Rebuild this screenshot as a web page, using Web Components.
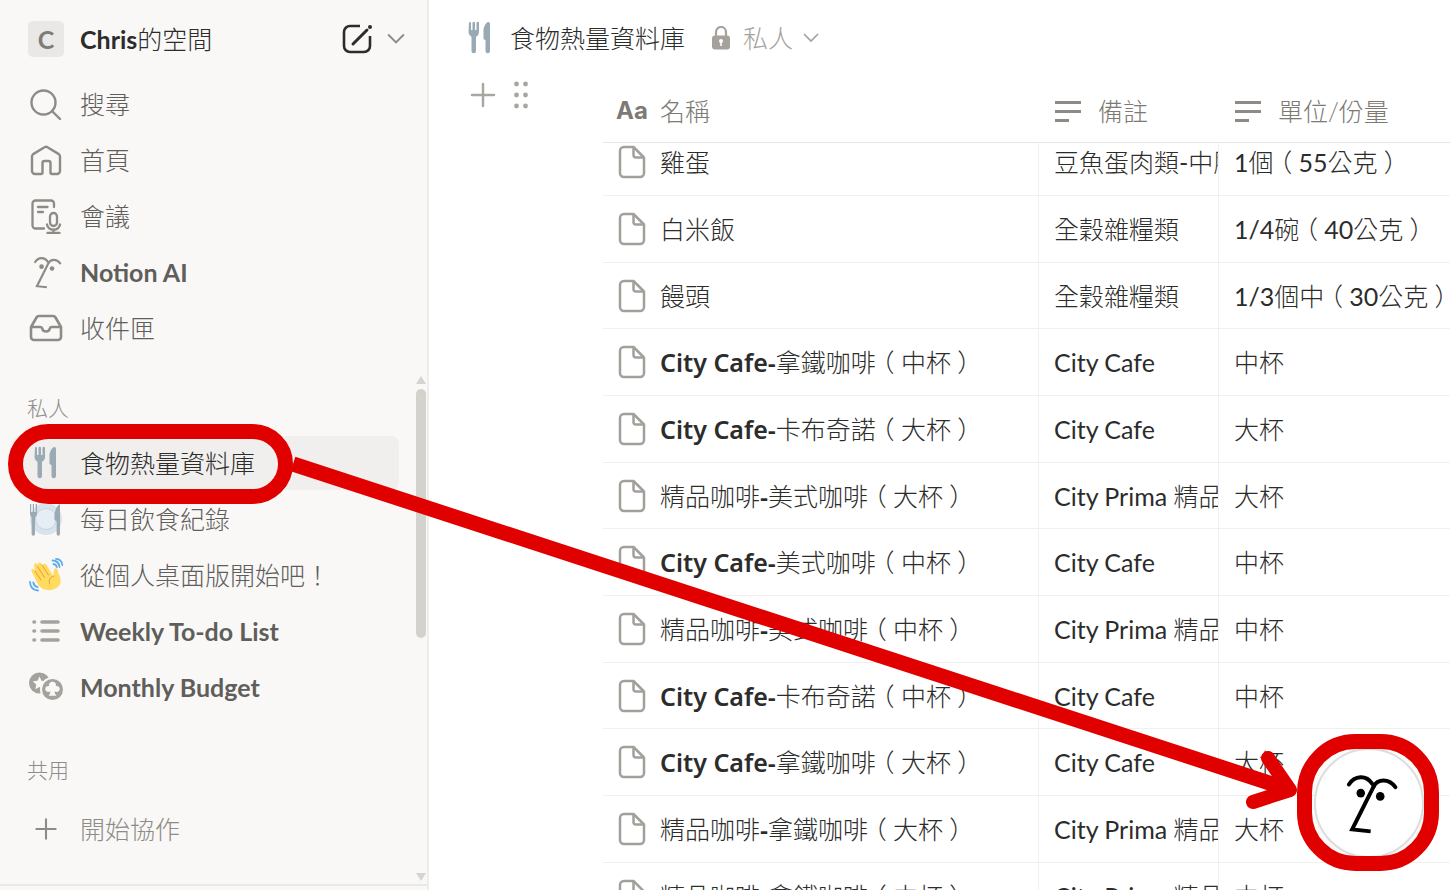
<!DOCTYPE html>
<html lang="zh-Hant">
<head>
<meta charset="utf-8">
<meta name="viewport" content="width=device-width, initial-scale=1">
<title>食物熱量資料庫</title>
<style>
  body {
    margin: 0;
    color: #2c2c2b;
    background: #fff;
    font-family: Lato, "Noto Sans CJK TC", sans-serif;
    font-size: 25px;
    font-weight: 300;
    line-height: 36px;
  }
</style>
</head>
<body>
<work-space></work-space>

<script>
const ICONS = {
  compose: ['0 0 32 32', '<path d="M19 3H9a6 6 0 0 0-6 6v14a6 6 0 0 0 6 6h14a6 6 0 0 0 6-6V13" fill="none" stroke="currentColor" stroke-width="2.600"/><path d="M12 21 26 7" stroke="currentColor" stroke-width="3" stroke-linecap="round"/><circle cx="29" cy="4" r="2" fill="currentColor"/>'],
  chevron: ['0 0 16 16', '<path d="m1 4 7 7 7-7" fill="none" stroke="currentColor" stroke-width="1.700"/>'],
  search: ['0 0 36 36', '<g fill="none" stroke="currentColor" stroke-width="2.4" stroke-linecap="round"><circle cx="15.500" cy="16.500" r="12"/><path d="m24 25 8 8"/></g>'],
  home: ['0 0 36 36', '<path d="M4 14.500c0-1 .4-1.800 1.200-2.400L16.500 5.300a2.800 2.800 0 0 1 3 0l11.300 6.800c.8.600 1.200 1.400 1.200 2.400V29a3 3 0 0 1-3 3h-5a1.500 1.500 0 0 1-1.500-1.500V21a2 2 0 0 0-2-2h-4a2 2 0 0 0-2 2v9.500A1.500 1.500 0 0 1 13 32H7a3 3 0 0 1-3-3z" fill="none" stroke="currentColor" stroke-width="2.400" stroke-linejoin="round"/>'],
  meeting: ['0 0 36 36', '<g fill="none" stroke="currentColor" stroke-width="2.300" stroke-linecap="round"><path d="M16 30.500H7.500a3 3 0 0 1-3-3V5.500a3 3 0 0 1 3-3H23a3 3 0 0 1 3 3V9M10 9h9.500M10 14h5"/><rect x="22" y="15" width="7" height="13" rx="3.500"/><path d="M19 26.500c1.500 7 11.500 7 13 0M25.500 32v3M19.500 35h12"/></g>'],
  face: ['-12 0 180 200', '<g fill="none" stroke="currentColor" stroke-width="12" stroke-linecap="round"><path d="M17 44Q30 23 52 22T88 42"/><path d="M158 52Q143 32 122 32T92 50" /></g><path d="M93 48 27 180l56 6" fill="none" stroke="currentColor" stroke-width="12"/><circle cx="53" cy="70" r="13" fill="currentColor"/><circle cx="112" cy="80" r="13" fill="currentColor"/>'],
  inbox: ['0 0 36 36', '<g fill="none" stroke="currentColor" stroke-width="2.600" stroke-linejoin="round"><path d="m3 17 5.500-9.500A3 3 0 0 1 11 6h14a3 3 0 0 1 2.500 1.500L33 17v10a3 3 0 0 1-3 3H6a3 3 0 0 1-3-3z"/><path d="M3 17h9.500c1 0 1.500.6 1.700 1.500.8 4 6.800 4 7.600 0 .2-.9.700-1.500 1.700-1.500H33"/></g>'],
  cutlery: ['0 0 36 36', '<g fill="#9aaab5"><path d="M7 3a1 1 0 0 1 2 0v7h1.500V3a1.200 1.200 0 0 1 2.500 0v7h1.500V3a1 1 0 0 1 2.500 0v9c0 2-1 4-3 4.800V31a2 2 0 0 1-4.500 0V16.800C8 16 6.500 14 6.500 12z"/><path d="M28 4v27a2 2 0 0 1-4.500 0V20c-1.500 0-2-1-2-2.500V11c0-4 2-8 4.500-9 1-.4 2 .5 2 2z"/></g>'],
  plate: ['0 0 36 36', '<circle cx="18" cy="18" r="16" fill="#d9e3ed"/><circle cx="18" cy="18" r="10.500" fill="#e5edf5" stroke="#c5d3e0"/><g fill="#9aaab5"><path d="M2 3h1.200v8h1.600V3H6v8h1.700V3H9v9c0 2-.8 3.600-2 4.300V33a1.700 1.700 0 0 1-3.400 0V16.300C2.700 15.500 2 14 2 12z"/><path d="M32 3v30a1.700 1.700 0 0 1-3.400 0V20c-1.600 0-2.200-1-2.200-3 0-7 2-12 5.600-14z"/></g>'],
  wave: ['0 0 36 36', '<path d="M4.800 16.800 3.500 14c-.8-1.700 1.500-2.900 2.500-1.200l1 1.700-.9-6.300c-.2-2.300 2.500-2.800 3.400-.9l.5 1.100c-.9-2.900 2.400-4.200 3.700-1.600l1 2.200c-.2-2.600 2.700-3.200 3.900-1l6.600 11.100c.7-1.800.1-4.200 1-6.400.9-2.400 3.600-1.700 3.600.5 0 4 4 7.700 2.600 12.800C29.800 34 15.600 36.500 9.800 27z" fill="#ffdc5d"/><path d="m7 14 6 9M9.500 9.500l7 11M14 8l6.500 10M26 19c-4 1-5.500 4-4.500 7.500" fill="none" stroke="#ef9645" stroke-width="1" stroke-linecap="round"/><g fill="none" stroke="#5dadec" stroke-width="1.800" stroke-linecap="round"><path d="M24.500 3.500c4 0 6.500 2.500 7 6.500M25.500 7c1.800.3 3 1.500 3.300 3.200M28 1.800c3.500.2 6 2.700 6.300 6.200M2 25c.2 5 3 8 8 8.500M5.300 25.500c.5 2.500 2 4 4.300 4.700"/></g>'],
  list: ['0 0 36 36', '<g stroke="#a5a29d" stroke-width="3.600" stroke-linecap="round"><path d="M6 9h.5M14 9h16M6 18h.5M14 18h16M6 27h.5M14 27h16"/></g>'],
  coins: ['0 0 36 36', '<circle cx="11.500" cy="14" r="10.500" fill="#a5a29d"/><path d="m11.500 7.500 2 4.200 4.700.6-3.400 3.200.8 4.700-4.100-2.300-4.100 2.300.8-4.700-3.400-3.200 4.700-.6z" fill="#f9f8f7"/><circle cx="24.500" cy="20.500" r="12.500" fill="#f9f8f7"/><circle cx="24.500" cy="20.500" r="10.500" fill="#a5a29d"/><path d="M24.500 12.800c2.800 0 4 2.300 3.300 4.300 2.500-.4 4.200 1.300 3.900 3.400-.4 2.300-2.800 2.900-5.200 2 .2 1.800.9 3 2 4.200h-8c1.100-1.200 1.800-2.400 2-4.200-2.400.9-4.800.3-5.200-2-.3-2.100 1.400-3.800 3.900-3.400-.7-2 .5-4.300 3.300-4.300z" fill="#f9f8f7"/>'],
  plus: ['0 0 32 32', '<path d="M16 5v22M5 16h22" stroke="currentColor" stroke-width="2.400" stroke-linecap="round"/>'],
  grip: ['0 0 32 32', '<g fill="currentColor"><circle cx="11.500" cy="5" r="2.400"/><circle cx="20.500" cy="5" r="2.400"/><circle cx="11.500" cy="16" r="2.400"/><circle cx="20.500" cy="16" r="2.400"/><circle cx="11.500" cy="27" r="2.400"/><circle cx="20.500" cy="27" r="2.400"/></g>'],
  lock: ['0 0 24 24', '<rect x="3" y="9.500" width="18" height="14" rx="3" fill="currentColor"/><path d="M7 10V6a5 5 0 0 1 10 0v4" fill="none" stroke="currentColor" stroke-width="2.200"/><circle cx="12" cy="15" r="2" fill="#fff"/><path d="M11.200 15h1.600v5h-1.600z" fill="#fff"/>'],
  page: ['0 0 34 34', '<g fill="none" stroke="currentColor" stroke-width="2.500" stroke-linejoin="round"><path d="M9 2h9.500L29 12.500V28a4 4 0 0 1-4 4H9a4 4 0 0 1-4-4V6a4 4 0 0 1 4-4z"/><path d="M18.500 2.500V10a2.500 2.500 0 0 0 2.500 2.500h7.500"/></g>'],
  text: ['0 0 28 28', '<path d="M1 5.500h26M1 14.500h26M1 23.500h14" stroke="currentColor" stroke-width="3"/>'],
};

// Latin runs are set heavier than the light CJK glyphs around them,
// full-width brackets sit in the middle of their square
const mixed = text => text
  .replace(/[\x20-\x7e]+|[（）]/g, run => /[（）]/.test(run)
    ? `<span class="bracket">${run}</span>`
    : `<span class="latin">${run}</span>`);

class UiIcon extends HTMLElement {
  constructor() {
    super();
    this.attachShadow({ mode: 'open' });
  }

  connectedCallback() {
    const [box, shape] = ICONS[this.getAttribute('name')];
    this.shadowRoot.innerHTML = `
      <style>
        :host { display: block; flex: none; width: 36px; height: 36px; }
        svg { display: block; width: 100%; height: 100%; }
      </style>
      <svg viewBox="${box}" aria-hidden="true">${shape}</svg>
    `;
  }
}

class SideItem extends HTMLElement {
  constructor() {
    super();
    this.attachShadow({ mode: 'open' });
  }

  connectedCallback() {
    this.shadowRoot.innerHTML = `
      <style>
        :host { display: block; height: 56px; color: #5f5e5b; }
        :host([muted]) { color: #8e8c88; }
        :host([current]) { color: #2c2c2b; }
        a {
          display: flex;
          align-items: center;
          gap: 16px;
          height: 54px;
          margin: 0 17px 0 12px;
          padding: 0 16px;
          border-radius: 8px;
          color: inherit;
          text-decoration: none;
          white-space: nowrap;
        }
        :host([current]) a { background: #f0efed; }
        .icon { display: grid; place-items: center; flex: none; width: 36px; height: 36px; color: #8e8b86; }
        ui-icon[name="face"] { width: 32px; }
        ui-icon[name="plus"] { width: 28px; height: 28px; }
        .latin { font-weight: 700; }
      </style>
      <a href="#">
        <span class="icon"><ui-icon name="${this.getAttribute('icon')}"></ui-icon></span>
        <span>${mixed(this.getAttribute('label'))}</span>
      </a>
    `;
  }
}

class SideBar extends HTMLElement {
  constructor() {
    super();
    this.attachShadow({ mode: 'open' });
  }

  connectedCallback() {
    this.shadowRoot.innerHTML = `
      <style>
        :host {
          display: flex;
          flex-direction: column;
          flex: none;
          box-sizing: border-box;
          width: 429px;
          height: 100%;
          border-right: 2px solid #eeedeb;
          background: #f9f8f7;
        }
        header {
          display: flex;
          align-items: center;
          flex: none;
          box-sizing: border-box;
          height: 77px;
          padding: 0 22px 0 28px;
        }
        .badge {
          width: 36px;
          height: 36px;
          margin-right: 16px;
          border-radius: 5px;
          background: #e9e8e6;
          color: #7d7c78;
          font-weight: 700;
          text-align: center;
        }
        h1 { flex: 1; margin: 0; font-size: 25px; font-weight: 300; }
        .latin { font-weight: 700; }
        button { display: grid; place-items: center; padding: 0; border: 0; background: none; color: #2c2c2b; }
        .compose ui-icon { width: 32px; height: 32px; }
        .more { margin-left: 14px; color: #8e8b86; }
        .more ui-icon { width: 18px; height: 18px; }
        nav { flex: none; }
        .scroller { display: flex; flex: 1; min-height: 0; margin-top: 15px; }
        .pages { flex: 1; overflow: hidden; padding-top: 8px; }
        h2 { height: 28px; margin: 14px 0 14px 27px; font-size: 21px; font-weight: 300; line-height: 28px; color: #8e8c88; }
        .shared h2 { margin: 40px 0 18px 27px; }
        .bar { display: flex; flex-direction: column; width: 10px; gap: 5px; padding: 4px 1px 3px 0; }
        .bar i { height: 8px; background: #d5d4d0; clip-path: polygon(50% 0, 100% 100%, 0 100%); }
        .bar i:last-child { clip-path: polygon(0 0, 100% 0, 50% 100%); }
        .track { flex: 1; }
        .thumb { height: 52%; border-radius: 5px; background: #d3d2cd; }
        footer { flex: none; height: 4px; border-top: 2px solid #eae9e7; }
      </style>
      <header>
        <span class="badge">C</span>
        <h1>${mixed('Chris的空間')}</h1>
        <button class="compose" aria-label="新增頁面"><ui-icon name="compose"></ui-icon></button>
        <button class="more" aria-label="更多"><ui-icon name="chevron"></ui-icon></button>
      </header>
      <nav>
        <side-item icon="search" label="搜尋"></side-item>
        <side-item icon="home" label="首頁"></side-item>
        <side-item icon="meeting" label="會議"></side-item>
        <side-item icon="face" label="Notion AI"></side-item>
        <side-item icon="inbox" label="收件匣"></side-item>
      </nav>
      <div class="scroller">
        <div class="pages">
          <section>
            <h2>私人</h2>
            <side-item icon="cutlery" label="食物熱量資料庫" current></side-item>
            <side-item icon="plate" label="每日飲食紀錄"></side-item>
            <side-item icon="wave" label="從個人桌面版開始吧！"></side-item>
            <side-item icon="list" label="Weekly To-do List"></side-item>
            <side-item icon="coins" label="Monthly Budget"></side-item>
          </section>
          <section class="shared">
            <h2>共用</h2>
            <side-item icon="plus" label="開始協作" muted></side-item>
          </section>
        </div>
        <div class="bar"><i></i><div class="track"><div class="thumb"></div></div><i></i></div>
      </div>
      <footer></footer>
    `;
  }
}

class PageBar extends HTMLElement {
  constructor() {
    super();
    this.attachShadow({ mode: 'open' });
    this.shadowRoot.innerHTML = `
      <style>
        :host {
          display: flex;
          align-items: center;
          flex: none;
          box-sizing: border-box;
          height: 79px;
          padding: 0 0 4px 33px;
          white-space: nowrap;
        }
        a { display: flex; align-items: center; gap: 12px; color: #2c2c2b; text-decoration: none; }
        button {
          display: flex;
          align-items: center;
          gap: 10px;
          margin-left: 24px;
          padding: 0;
          border: 0;
          background: none;
          color: #a5a29c;
          font: inherit;
        }
        ui-icon[name="lock"] { width: 24px; height: 24px; }
        ui-icon[name="chevron"] { width: 16px; height: 16px; }
      </style>
      <a href="#"><ui-icon name="cutlery"></ui-icon><span>食物熱量資料庫</span></a>
      <button><ui-icon name="lock"></ui-icon><span>私人</span><ui-icon name="chevron"></ui-icon></button>
    `;
  }
}

class FoodTable extends HTMLElement {
  constructor() {
    super();
    this.attachShadow({ mode: 'open' });
  }

  get rows() {
    return [
      ['雞蛋', '豆魚蛋肉類-中脂', '1個（55公克）'],
      ['白米飯', '全穀雜糧類', '1/4碗（40公克）'],
      ['饅頭', '全穀雜糧類', '1/3個中（30公克）'],
      ['City Cafe-拿鐵咖啡（中杯）', 'City Cafe', '中杯'],
      ['City Cafe-卡布奇諾（大杯）', 'City Cafe', '大杯'],
      ['精品咖啡-美式咖啡（大杯）', 'City Prima 精品', '大杯'],
      ['City Cafe-美式咖啡（中杯）', 'City Cafe', '中杯'],
      ['精品咖啡-美式咖啡（中杯）', 'City Prima 精品', '中杯'],
      ['City Cafe-卡布奇諾（中杯）', 'City Cafe', '中杯'],
      ['City Cafe-拿鐵咖啡（大杯）', 'City Cafe', '大杯'],
      ['精品咖啡-拿鐵咖啡（大杯）', 'City Prima 精品', '大杯'],
      ['精品咖啡-拿鐵咖啡（中杯）', 'City Prima 精品', '中杯'],
    ];
  }

  connectedCallback() {
    const body = this.rows.map(([name, note, unit]) => `
      <tr>
        <td><div class="cell name"><ui-icon name="page"></ui-icon><span>${mixed(name)}</span></div></td>
        <td>${mixed(note)}</td>
        <td>${mixed(unit)}</td>
      </tr>
    `).join('');

    this.shadowRoot.innerHTML = `
      <style>
        :host { display: block; overflow: auto; scrollbar-width: none; }
        table { width: 100%; border-spacing: 0; table-layout: fixed; }
        .c-name { width: 435px; }
        .c-note { width: 180px; }
        th, td {
          box-sizing: border-box;
          padding: 0 0 0 15px;
          overflow: hidden;
          border-bottom: 1px solid #f1f0ef;
          border-left: 1px solid #f1f0ef;
          text-align: left;
          font-weight: 300;
          white-space: nowrap;
        }
        th:first-child, td:first-child { padding-left: 12px; border-left: 0; }
        th {
          position: sticky;
          top: 0;
          z-index: 1;
          height: 64px;
          border-left-color: transparent;
          border-bottom-color: #e6e5e3;
          background: #fff;
          color: #7d7a75;
        }
        tbody tr { height: 67px; }
        tbody tr:nth-child(3n) { height: 66px; }
        .cell { display: flex; align-items: center; gap: 16px; }
        .name { gap: 11px; }
        .aa { width: 34px; font: 700 24px/36px Inter, sans-serif; text-align: center; }
        ui-icon[name="page"] { width: 34px; height: 34px; color: #a3a09b; }
        ui-icon[name="text"] { width: 28px; height: 28px; color: #8e8b86; }
        .latin { font-weight: 400; }
        .name .latin { font-family: "Noto Sans", sans-serif; font-weight: 600; }
        .bracket {
          display: inline-block;
          width: 25px;
          font-family: "Noto Sans CJK TC", sans-serif;
          font-feature-settings: "halt";
          line-height: 24px;
          text-align: center;
        }
      </style>
      <table>
        <colgroup><col class="c-name"><col class="c-note"><col></colgroup>
        <thead>
          <tr>
            <th><div class="cell name"><span class="aa">Aa</span><span>名稱</span></div></th>
            <th><div class="cell"><ui-icon name="text"></ui-icon><span>備註</span></div></th>
            <th><div class="cell"><ui-icon name="text"></ui-icon><span>單位/份量</span></div></th>
          </tr>
        </thead>
        <tbody>${body}</tbody>
      </table>
    `;

    // The list opens slightly scrolled under its header
    this.scrollTop = 14;
  }
}

class AiButton extends HTMLElement {
  constructor() {
    super();
    this.attachShadow({ mode: 'open' });
    this.shadowRoot.innerHTML = `
      <style>
        :host { display: block; }
        button {
          display: grid;
          place-items: center;
          width: 110px;
          height: 110px;
          padding: 0;
          border: 2px solid #dddddc;
          border-radius: 50%;
          background: #fff;
          color: #000;
          box-shadow: 0 4px 24px #0000000d;
        }
        ui-icon { width: 60px; height: 66px; }
      </style>
      <button aria-label="Notion AI"><ui-icon name="face"></ui-icon></button>
    `;
  }
}

class RedMarks extends HTMLElement {
  constructor() {
    super();
    this.attachShadow({ mode: 'open' });
    this.shadowRoot.innerHTML = `
      <style>
        :host { display: block; pointer-events: none; }
        svg { display: block; width: 100%; height: 100%; }
      </style>
      <svg viewBox="0 0 1450 890" fill="none" stroke="#e10000" stroke-width="15" aria-hidden="true">
        <rect x="15.500" y="431.500" width="270" height="65" rx="33"/>
        <path d="M293 464 1288 789"/>
        <path d="M1268 758 1290 790 1253 802" stroke-width="14" stroke-linecap="round" stroke-linejoin="round"/>
        <rect x="1304.500" y="741.500" width="127" height="122" rx="51"/>
      </svg>
    `;
  }
}

class WorkSpace extends HTMLElement {
  constructor() {
    super();
    this.attachShadow({ mode: 'open' });
    this.shadowRoot.innerHTML = `
      <style>
        :host { display: flex; position: relative; height: 100vh; overflow: hidden; }
        main { display: flex; flex-direction: column; flex: 1; min-width: 0; }
        .database { display: flex; flex: 1; min-height: 0; }
        .handles { display: flex; flex: none; align-items: start; gap: 6px; box-sizing: border-box; width: 174px; padding-left: 38px; }
        .handles button { padding: 0; border: 0; background: none; color: #a8a6a1; }
        .handles ui-icon { width: 32px; height: 32px; }
        food-table { flex: 1; min-width: 0; }
        ai-button { position: absolute; right: 26px; bottom: 32px; z-index: 2; }
        red-marks { position: absolute; inset: 0; z-index: 3; }
      </style>
      <side-bar></side-bar>
      <main>
        <page-bar></page-bar>
        <div class="database">
          <div class="handles">
            <button aria-label="新增"><ui-icon name="plus"></ui-icon></button>
            <button aria-label="拖曳"><ui-icon name="grip"></ui-icon></button>
          </div>
          <food-table></food-table>
        </div>
      </main>
      <ai-button></ai-button>
      <red-marks></red-marks>
    `;
  }
}

customElements.define('ui-icon', UiIcon);
customElements.define('side-item', SideItem);
customElements.define('side-bar', SideBar);
customElements.define('page-bar', PageBar);
customElements.define('food-table', FoodTable);
customElements.define('ai-button', AiButton);
customElements.define('red-marks', RedMarks);
customElements.define('work-space', WorkSpace);
</script>
</body>
</html>
